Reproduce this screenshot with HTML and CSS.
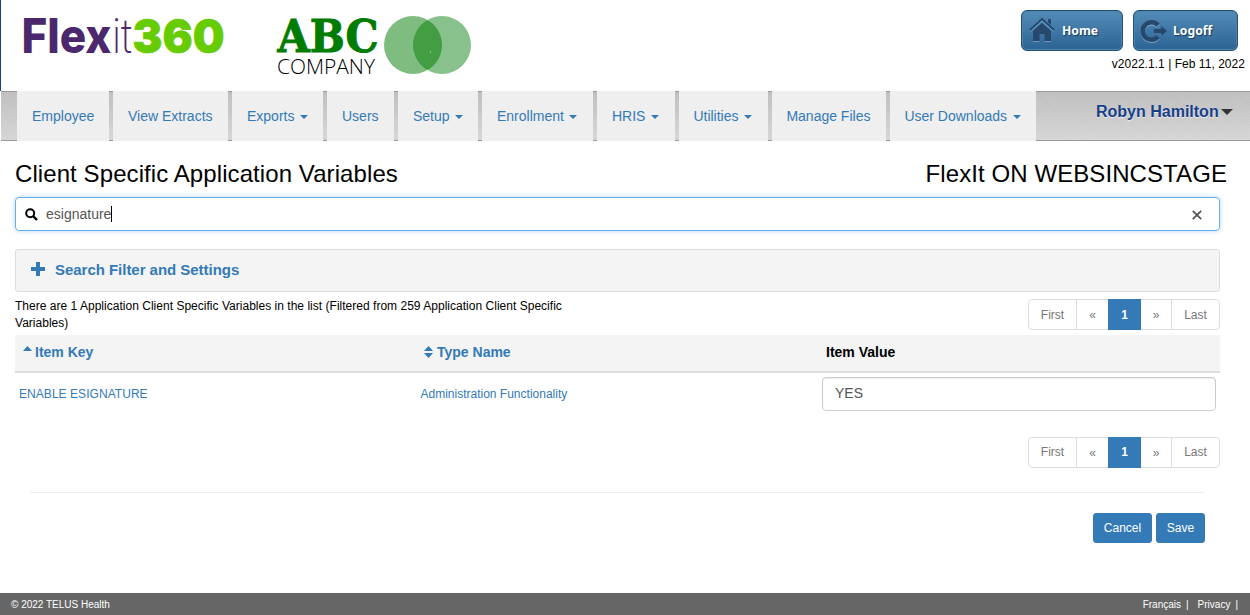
FILE: index.html
```html
<!DOCTYPE html>
<html lang="en">
<head>
<meta charset="utf-8">
<title>Client Specific Application Variables</title>
<link rel="stylesheet" href="styles.css">
</head>
<body>
<div class="page">
<header class="header">
  <div class="logos">
    <svg class="flexit" width="215" height="66" viewBox="-5 -6 215 66">
      <text class="lg-flex" x="-1.500" y="41" textLength="90" lengthAdjust="spacingAndGlyphs">Flex</text>
      <text class="lg-it" x="89" y="41" textLength="20" lengthAdjust="spacingAndGlyphs">it</text>
      <text class="lg-360" x="109.500" y="41" textLength="92" lengthAdjust="spacingAndGlyphs">360</text>
    </svg>
    <svg class="abc" width="205" height="76" viewBox="-5 -6 205 76">
      <text class="lg-abc" x="1.500" y="38.500" textLength="101" lengthAdjust="spacingAndGlyphs">ABC</text>
      <text class="lg-company" x="1" y="60.500" textLength="98" lengthAdjust="spacingAndGlyphs">COMPANY</text>
      <circle cx="137" cy="32" r="29" fill="#7fbc80"/>
      <circle cx="166" cy="32" r="29" fill="#88c18b"/>
      <path d="M151.500 6.900a29 29 0 0 1 0 50.200a29 29 0 0 1 0-50.200z" fill="#429d43"/>
      <circle cx="154.500" cy="39" r=".6" fill="#e6f2e6"/>
    </svg>
  </div>
  <div class="account">
    <div class="top-buttons">
      <a class="top-btn home">
        <svg width="28" height="28" viewBox="0 0 28 28">
          <path d="M5 14V24H11.500V17H16.500V24H23V14L14 6z" fill="#26486c"/>
          <path d="M2 13L14 2L26 13" fill="none" stroke="#26486c" stroke-width="1.800"/>
          <path d="M20 2H23V8L20 5.500z" fill="#26486c"/>
          <path d="M5 24.500H11.500M16.500 24.500H23M2.500 14.500L14 4L25.500 14.500" fill="none" stroke="#78a5ca" stroke-width=".8"/>
        </svg>
        <span>Home</span>
      </a>
      <a class="top-btn logoff">
        <svg width="28" height="28" viewBox="0 0 28 28">
          <path d="M18 8.300A8.700 8.700 0 1 0 18 19.700" fill="none" stroke="#78a5ca" stroke-width="4.500" transform="translate(0 1)"/>
          <path d="M18 8.300A8.700 8.700 0 1 0 18 19.700" fill="none" stroke="#26486c" stroke-width="4.500"/>
          <path d="M13.500 11.500H21V8.500L27.500 14L21 19.500V16.500H13.500z" fill="#26486c" stroke="#4179a7" stroke-width=".8"/>
        </svg>
        <span>Logoff</span>
      </a>
    </div>
    <div class="version">v2022.1.1 | Feb 11, 2022</div>
  </div>
</header>
<nav class="nav">
  <a class="tab w92">Employee</a>
  <a class="tab w115">View Extracts</a>
  <a class="tab w91">Exports<i class="caret"></i></a>
  <a class="tab w67">Users</a>
  <a class="tab w80">Setup<i class="caret"></i></a>
  <a class="tab w111">Enrollment<i class="caret"></i></a>
  <a class="tab w78">HRIS<i class="caret"></i></a>
  <a class="tab w89">Utilities<i class="caret"></i></a>
  <a class="tab w114">Manage Files</a>
  <a class="tab w146">User Downloads<i class="caret"></i></a>
  <div class="user"><span class="user-name">Robyn Hamilton</span><i class="user-caret"></i></div>
</nav>
<main class="main">
  <div class="titles">
    <h1 class="title">Client Specific Application Variables</h1>
    <div class="title env">FlexIt ON WEBSINCSTAGE</div>
  </div>
  <div class="search">
    <svg width="13" height="13" viewBox="0 0 13 13"><circle cx="5.200" cy="5.200" r="4" fill="none" stroke="#000" stroke-width="2"/><path d="M8 8L12 12" stroke="#000" stroke-width="2.400"/></svg>
    <span class="query">esignature</span><i class="cursor"></i>
    <svg class="clear" width="10" height="10" viewBox="0 0 10 10"><path d="M.8.800L9.200 9.200M9.200.800L.8 9.200" stroke="#555" stroke-width="1.800"/></svg>
  </div>
  <div class="filter">
    <svg width="14" height="14" viewBox="0 0 14 14"><path d="M5 0H9V5H14V9H9V14H5V9H0V5H5z" fill="#337ab7"/></svg>
    <span class="filter-text">Search Filter and Settings</span>
  </div>
  <div class="summary">
    <div class="count"><span class="count-line">There are 1 Application Client Specific Variables in the list (Filtered from 259 Application Client Specific</span><br><span class="count-end">Variables)</span></div>
    <div class="pager"><span class="pg first">First</span><span class="pg prev">«</span><span class="pg current">1</span><span class="pg next">»</span><span class="pg last">Last</span></div>
  </div>
  <div class="row head">
    <div class="cell sortable"><svg class="sort-up" width="9" height="12" viewBox="0 0 9 12"><path d="M0 5L4.500 0L9 5z" fill="#337ab7"/></svg><span class="th-key">Item Key</span></div>
    <div class="cell sortable"><svg class="sort-both" width="9" height="12" viewBox="0 0 9 12"><path d="M0 5L4.500 0L9 5zM0 7L4.500 12L9 7z" fill="#337ab7"/></svg><span class="th-type">Type Name</span></div>
    <div class="cell"><span class="th-value">Item Value</span></div>
  </div>
  <div class="row data">
    <div class="cell"><a class="key">ENABLE ESIGNATURE</a></div>
    <div class="cell"><a class="type">Administration Functionality</a></div>
    <div class="cell"><div class="value">YES</div></div>
  </div>
  <div class="bottom-pager"><div class="pager"><span class="pg first">First</span><span class="pg prev">«</span><span class="pg current">1</span><span class="pg next">»</span><span class="pg last">Last</span></div></div>
  <div class="actions"><a class="btn cancel">Cancel</a><a class="btn save">Save</a></div>
</main>
<footer class="footer"><span class="copy">© 2022 TELUS Health</span><div class="foot-links"><span>Français</span><i>|</i><span>Privacy</span><i>|</i></div></footer>
</div>
</body>
</html>
```
FILE: styles.css
```css
*{box-sizing:border-box}
body{margin:0;background:#fff;color:#000;font-family:"Liberation Sans",Arial,sans-serif;font-size:14px}
i{font-style:normal}
svg{display:block;flex:none}
span{white-space:nowrap}
.page{width:1250px;height:615px;display:flex;flex-direction:column;overflow:hidden}
.header{height:91px;display:flex;justify-content:space-between;border-left:1px solid #163f87}
.logos{display:flex;padding:6px 0 0 17px}
.abc{margin:1px 0 0 38px}
.lg-flex{font-family:Inter,sans-serif;font-size:48px;font-weight:800;fill:#4b286d}
.lg-it{font-family:Inter,sans-serif;font-size:48px;font-weight:200;fill:#4b286d}
.lg-360{font-family:Inter,sans-serif;font-size:47px;font-weight:900;fill:#6c0;stroke:#6c0;stroke-width:.6}
.lg-abc{font-family:"DejaVu Serif",serif;font-size:45px;font-weight:700;fill:#007d00;stroke:#007d00;stroke-width:1}
.lg-company{font-family:"Open Sans",sans-serif;font-weight:300;font-size:21px;fill:#000}
.account{width:229px}
.top-buttons{display:flex;gap:10px;margin-top:10px}
.top-btn{display:flex;align-items:center;height:41px;border:1px solid #244f73;border-radius:6px;background:linear-gradient(#538bb9,#2b6392);box-shadow:inset 0 0 0 1px #4a83b0;color:#fff;font:bold 12.200px "Noto Sans",sans-serif;text-shadow:1px 1px 1px #183c5c}
.home{width:102px;padding-left:6px;gap:6px}
.logoff{width:105px;padding-left:6px;gap:5px}
.version{font-size:12px;letter-spacing:.04px;text-align:right;padding:6px 5px 0 0}
.nav{height:50px;flex:none;display:flex;gap:4px;padding-left:16px;margin-left:1px;border-top:1px solid #999;border-bottom:1px solid #999;background:repeating-linear-gradient(45deg,rgba(255,255,255,.06) 0 1px,transparent 1px 2px),linear-gradient(#bebebe,#d5d5d5)}
.tab{flex:none;display:flex;align-items:center;height:50px;margin-top:-1px;padding-left:15px;background:#efefef;color:#337ab7}
.w92{width:92px}.w115{width:115px}.w91{width:91px}.w67{width:67px}.w80{width:80px}.w111{width:111px}.w78{width:78px}.w89{width:89px}.w114{width:114px}.w146{width:146px}
.w114,.w89,.w146{padding-left:14.400px}
.caret{border:4px solid transparent;border-top-color:#337ab7;border-bottom:0;margin:2px 0 0 5.500px}
.user{display:flex;margin-left:56px;padding-top:11px;color:#163f87;font-weight:700;font-size:16px}
.user-name{text-shadow:0 1px 1px #eee}
.user-caret{border:6px solid transparent;border-top-color:#333;border-bottom:0;height:6px;margin:6px 0 0 2px}
.main{padding-left:15px;width:1220px;flex:1}
.titles{width:1212px;display:flex;justify-content:space-between;height:56px;padding-top:19px}
.title{margin:0;font-size:24px;font-weight:400;line-height:27px;white-space:nowrap;letter-spacing:.085px}
.search{height:34px;border:1px solid #66afe9;border-radius:4px;box-shadow:0 0 5px rgba(102,175,233,.5);display:flex;align-items:center;padding:0 17px 0 9px;color:#555}
.query{margin-left:8px}
.cursor{width:1px;height:16px;background:#000}
.clear{margin-left:auto;margin-top:2px}
.filter{height:43px;margin-top:18px;border:1px solid #ddd;border-radius:3px;background:#f4f4f4;display:flex;align-items:center;padding:0 0 3px 15px;gap:10px;color:#337ab7;font-weight:700;font-size:15px}
.filter-text{letter-spacing:-.03px}
.summary{display:flex;justify-content:space-between;height:43px;padding-top:5px}
.count{font-size:12px;line-height:17px;padding-top:1px;letter-spacing:.02px}
.pager{display:flex;width:192px;height:31px;margin-top:2px;border:1px solid #ddd;border-radius:4px;font-size:12px;color:#777;line-height:29px;text-align:center}
.summary .first,.summary .last{line-height:31px}
.summary .current{line-height:33px}
.pg{border-right:1px solid #ddd}
.first{width:48px}.prev{width:31px;border-right:0}.current{width:33px;height:31px;margin-top:-1px;line-height:31px;background:#337ab7;color:#fff;font-weight:700;border:0}.next{width:31px}.last{width:47px;border-right:0}
.row{display:grid;grid-template-columns:401.500px 401.500px 1fr}
.head{height:38px;background:#f4f4f4;border-bottom:2px solid #ddd;font-weight:700;line-height:34px}
.cell{padding-left:4px}
.head .cell{padding-left:8px}
.sortable{display:flex;align-items:flex-start;gap:3px;color:#337ab7}
.sort-up,.sort-both{margin-top:11px}
.sort-both{margin-left:-1px}
.th-type{margin-left:1.500px}
.data{height:64px;padding-top:4px;font-size:12px;line-height:34px;color:#337ab7}
.key{letter-spacing:.05px}
.value{width:394px;height:34px;border:1px solid #ccc;border-radius:4px;box-shadow:inset 0 1px 1px rgba(0,0,0,.075);padding-left:12px;line-height:31px;font-size:14px;color:#555}
.bottom-pager{display:flex;justify-content:flex-end;height:55px}
.pager .prev,.pager .next{line-height:31px}
.bottom-pager .pager{margin-top:0}
.actions{margin:0 15px;border-top:1px solid #eee;padding-top:20px;display:flex;justify-content:flex-end;gap:4px}
.btn{height:30px;border:1px solid #337ab7;border-radius:3px;background:#337ab7;color:#fff;font-size:12px;line-height:28px;text-align:center}
.cancel{width:59px}.save{width:49px}
.footer{height:22px;background:#666;color:#fff;display:flex;justify-content:space-between;font-size:10px;line-height:23px;padding:0 12px 0 11px}
.foot-links{display:flex}
.foot-links i{margin:0 9px 0 5px}
.foot-links i:last-child{margin-right:0}
```
